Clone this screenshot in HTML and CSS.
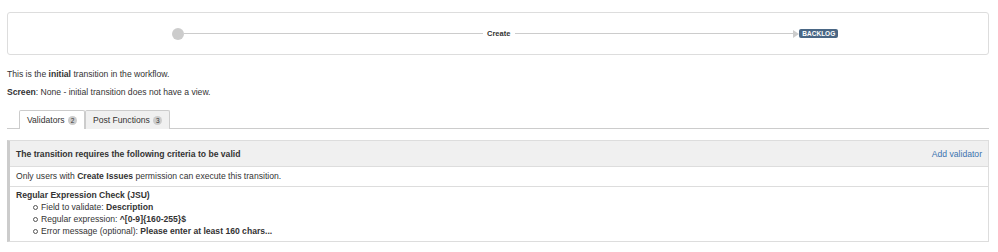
FILE: index.html
```html
<!DOCTYPE html>
<html lang="en">
<head>
  <meta charset="UTF-8" />
  <meta name="viewport" content="width=device-width, initial-scale=1" />
  <title>Transition: Create</title>
  <link rel="stylesheet" href="styles.css">
</head>
<body>
  <div class="page">
    <div class="diagram">
      <div class="dot"></div>
      <div class="line line-left"></div>
      <div class="transition-name">Create</div>
      <div class="line line-right"></div>
      <div class="arrow"></div>
      <div class="status">BACKLOG</div>
    </div>

    <p class="info first">This is the <b>initial</b> transition in the workflow.</p>
    <p class="info"><b>Screen</b>: None - initial transition does not have a view.</p>

    <div class="tabs">
      <div class="tab active">Validators <span class="badge">2</span></div>
      <div class="tab">Post Functions <span class="badge">3</span></div>
    </div>

    <div class="panel">
      <div class="panel-head">
        <div class="panel-title">The transition requires the following criteria to be valid</div>
        <a class="panel-link" href="#">Add validator</a>
      </div>
      <div class="panel-row">Only users with <b>Create Issues</b> permission can execute this transition.</div>
      <div class="panel-row rule">
        <div class="rule-name">Regular Expression Check (JSU)</div>
        <ul class="rule-list">
          <li>Field to validate: <b>Description</b></li>
          <li>Regular expression: <b>^[0-9]{160-255}$</b></li>
          <li>Error message (optional): <b>Please enter at least 160 chars...</b></li>
        </ul>
      </div>
    </div>
  </div>
</body>
</html>
```

FILE: styles.css
```css
body {
  font-family: 'Liberation Sans', Arial, sans-serif;
  font-size: 8.6px;
  color: #333;
  margin: 0;
  background: #fff;
}

.page {
  padding: 12px 9px 0 7px;
}

.diagram {
  display: flex;
  align-items: center;
  height: 41px;
  border: 1px solid #ddd;
  border-radius: 3px;
}

.dot {
  width: 12px;
  height: 12px;
  border-radius: 50%;
  background: #ccc;
  margin-left: 164px;
}

.line {
  height: 1px;
  background: #ccc;
}

.line-left {
  width: 299px;
}

.line-right {
  width: 278px;
}

.transition-name {
  font-weight: bold;
  font-size: 7.5px;
  padding: 0 5px 0 4px;
}

.arrow {
  width: 0;
  height: 0;
  border-left: 6px solid #ccc;
  border-top: 4px solid transparent;
  border-bottom: 4px solid transparent;
}

.status {
  background: #4a6785;
  color: #fff;
  font-weight: bold;
  font-size: 6.5px;
  line-height: 9px;
  padding: 0 3px;
  border-radius: 2px;
}

.info {
  margin: 0;
  line-height: 10px;
}

.info.first {
  margin-top: 14px;
}

.info + .info {
  margin-top: 8px;
}

.tabs {
  display: flex;
  margin-top: 13px;
  padding-left: 12px;
  border-bottom: 1px solid #ccc;
}

.tab {
  padding: 4px 7px 3px 7px;
  line-height: 10px;
  border: 1px solid #ccc;
  border-bottom: none;
  background: #f0f0f0;
  margin-bottom: -1px;
  border-radius: 2px 2px 0 0;
}

.tab.active {
  background: #fff;
  padding-bottom: 4px;
}

.badge {
  display: inline-block;
  background: #ccc;
  color: #333;
  font-size: 6.5px;
  line-height: 9px;
  min-width: 5px;
  padding: 0 2px;
  border-radius: 5px;
  text-align: center;
  margin-left: 1px;
}

.panel {
  margin-top: 11px;
  border: 1px solid #ddd;
  border-left: 3px solid #ccc;
}

.panel-head {
  display: flex;
  justify-content: space-between;
  align-items: center;
  background: #f0f0f0;
  height: 25px;
  padding: 0 6px 0 6px;
  border-bottom: 1px solid #ddd;
}

.panel-title {
  font-weight: bold;
}

.panel-link {
  color: #3b73af;
  text-decoration: none;
}

.panel-row {
  padding: 4px 6px 5px 6px;
  line-height: 10px;
}

.panel-row + .panel-row {
  border-top: 1px solid #ddd;
}

.panel-row.rule {
  padding-top: 3px;
  padding-bottom: 4px;
}

.rule-name {
  font-weight: bold;
}

.rule-list {
  margin: 1px 0 0;
  padding-left: 17px;
  list-style: none;
}

.rule-list li {
  line-height: 12px;
  display: flex;
  align-items: center;
  white-space: pre;
}

.rule-list li::before {
  content: "";
  width: 3px;
  height: 3px;
  border: 1px solid #555;
  border-radius: 50%;
  margin-right: 3px;
  flex-shrink: 0;
}
```
